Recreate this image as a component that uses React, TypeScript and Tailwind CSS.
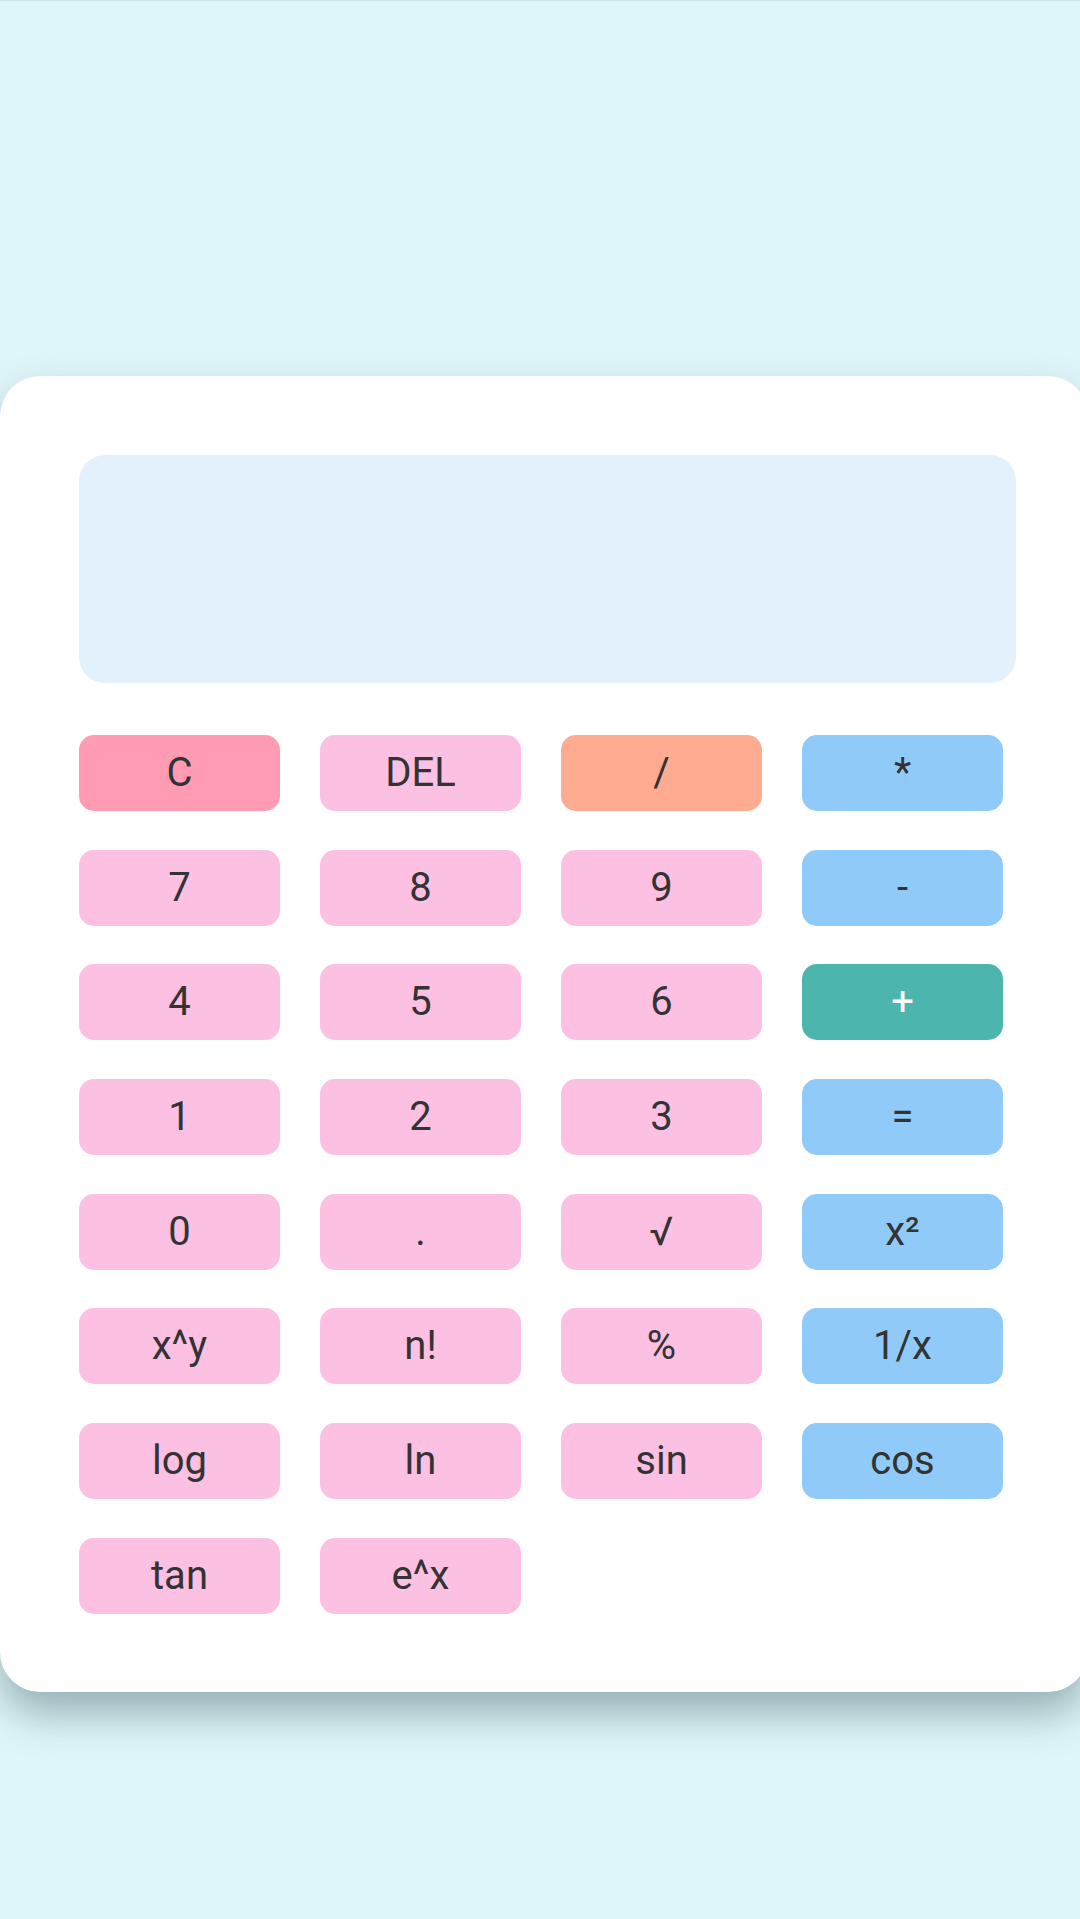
import React from "react";

type Btn = { label: string; bg: string; text?: string };

const P = "bg-[#FCC0E2]";
const B = "bg-[#90CAF9]";

const buttons: Btn[] = [
  { label: "C", bg: "bg-[#FF9BB3]" },
  { label: "DEL", bg: P },
  { label: "/", bg: "bg-[#FFAB91]" },
  { label: "*", bg: B },
  { label: "7", bg: P },
  { label: "8", bg: P },
  { label: "9", bg: P },
  { label: "-", bg: B },
  { label: "4", bg: P },
  { label: "5", bg: P },
  { label: "6", bg: P },
  { label: "+", bg: "bg-[#4DB6AC]", text: "text-white" },
  { label: "1", bg: P },
  { label: "2", bg: P },
  { label: "3", bg: P },
  { label: "=", bg: B },
  { label: "0", bg: P },
  { label: ".", bg: P },
  { label: "√", bg: P },
  { label: "x²", bg: B },
  { label: "x^y", bg: P },
  { label: "n!", bg: P },
  { label: "%", bg: P },
  { label: "1/x", bg: B },
  { label: "log", bg: P },
  { label: "ln", bg: P },
  { label: "sin", bg: P },
  { label: "cos", bg: B },
  { label: "tan", bg: P },
  { label: "e^x", bg: P },
];

export default function App() {
  return (
    <div
      className="w-[1080px] h-[1919px] overflow-hidden bg-[#DFF6F9] border-t border-[#cfe4e6]"
      style={{ fontFamily: "Roboto, 'Noto Sans', 'DejaVu Sans', sans-serif" }}
    >
      <div className="mt-[375px] w-[1088px] h-[1316px] bg-white rounded-[40px] shadow-[0_22px_40px_rgba(40,75,80,0.4)] pt-[79px] pl-[79px]">
        <div className="w-[937px] h-[228px] bg-[#E3F1FC] rounded-[26px]" />
        <div className="mt-[52px] grid grid-cols-[repeat(4,201px)] gap-x-[40px] gap-y-[38.7px]">
          {buttons.map((b, i) => (
            <button
              key={i}
              className={`h-[76px] rounded-[15px] flex items-center justify-center text-[40px] leading-none ${b.bg} ${b.text ?? "text-[#333333]"}`}
            >
              {b.label}
            </button>
          ))}
        </div>
      </div>
    </div>
  );
}
